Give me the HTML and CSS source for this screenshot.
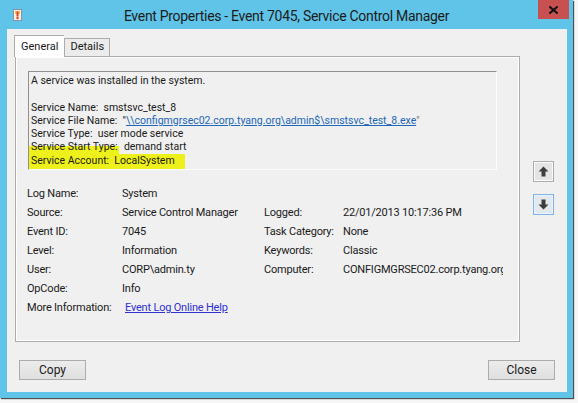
FILE: index.html
```html
<!DOCTYPE html>
<html>
<head>
<meta charset="utf-8">
<title>Event Properties</title>
<link rel="stylesheet" href="styles.css">
</head>
<body>
<div class="window">
  <div class="titlebar">
    <div class="tb-left">
      <svg class="app-icon" width="9" height="12" viewBox="0 0 9 12">
        <rect x="0.5" y="0.5" width="8" height="11" fill="#f7f1d8" stroke="#8c8fb0"/>
        <rect x="2" y="2" width="5" height="3" fill="#f1c24a"/>
        <rect x="3.5" y="2.5" width="2" height="5" fill="#d9443a"/>
        <circle cx="4.5" cy="9" r="1.2" fill="#d9443a"/>
      </svg>
    </div>
    <div class="title">Event Properties - Event 7045, Service Control Manager</div>
    <div class="tb-right">
      <div class="close-btn">
        <svg width="9" height="8" viewBox="0 0 9 8"><path d="M1 1 L8 7 M8 1 L1 7" stroke="#111" stroke-width="2" stroke-linecap="square"/></svg>
      </div>
    </div>
  </div>
  <div class="client">
    <div class="main-row">
      <div class="tabctrl">
        <div class="tabs">
          <div class="tab active">General</div>
          <div class="tab">Details</div>
        </div>
        <div class="panel">
          <div class="desc">
            <div>A service was installed in the system.</div>
            <div>&nbsp;</div>
            <div>Service Name:&nbsp; smstsvc_test_8</div>
            <div>Service File Name:&nbsp; "<a class="link" href="#">\\configmgrsec02.corp.tyang.org\admin$\smstsvc_test_8.exe</a><span class="quote">"</span></div>
            <div>Service Type:&nbsp; user mode service</div>
            <div><span class="hl-part">Service Start Type:</span>&nbsp; demand start</div>
            <div><span class="hl">Service Account:&nbsp; LocalSystem</span></div>
          </div>
          <div class="fields">
            <div class="lbl">Log Name:</div><div class="val">System</div><div></div><div></div>
            <div class="lbl">Source:</div><div class="val">Service Control Manager</div><div class="lbl">Logged:</div><div class="val2">22/01/2013 10:17:36 PM</div>
            <div class="lbl">Event ID:</div><div class="val">7045</div><div class="lbl">Task Category:</div><div class="val2">None</div>
            <div class="lbl">Level:</div><div class="val">Information</div><div class="lbl">Keywords:</div><div class="val2">Classic</div>
            <div class="lbl">User:</div><div class="val">CORP\admin.ty</div><div class="lbl">Computer:</div><div class="val2">CONFIGMGRSEC02.corp.tyang.org</div>
            <div class="lbl">OpCode:</div><div class="val">Info</div><div></div><div></div>
            <div class="lbl">More Information:</div><div class="val wide"><a class="help" href="#">Event Log Online Help</a></div>
          </div>
        </div>
      </div>
      <div class="side">
        <div class="sbtn">
          <svg width="11" height="11" viewBox="0 0 11 11"><path d="M5.5 0.5 L10.5 5.5 H7.5 V10.5 H3.5 V5.5 H0.5 Z" fill="#3d3d3d"/></svg>
        </div>
        <div class="sbtn focus">
          <svg width="11" height="11" viewBox="0 0 11 11"><path d="M5.5 10.5 L10.5 5.5 H7.5 V0.5 H3.5 V5.5 H0.5 Z" fill="#3d3d3d"/></svg>
        </div>
      </div>
    </div>
    <div class="footer">
      <div class="btn">Copy</div>
      <div class="btn">Close</div>
    </div>
  </div>
</div>
</body>
</html>
```
FILE: styles.css
```css
* { box-sizing: border-box; }
html, body { margin: 0; padding: 0; }
body {
  width: 578px;
  height: 403px;
  overflow: hidden;
  background: #f6f6f6;
  font-family: Roboto, "Noto Sans", sans-serif;
  font-size: 11px;
  color: #1a1a1a;
}
.window {
  width: 573px;
  height: 398px;
  background: #60c4e8;
  box-shadow: 1px 1px 1px rgba(50, 50, 50, 0.85);
  display: flex;
  flex-direction: column;
}
.titlebar {
  height: 29px;
  flex: none;
  display: grid;
  grid-template-columns: 1fr auto 1fr;
  align-items: start;
}
.tb-left { display: flex; padding: 9px 0 0 13px; }
.tb-right { display: flex; justify-content: flex-end; padding-right: 4px; }
.title {
  font-size: 14px;
  letter-spacing: -0.3px;
  line-height: 18px;
  padding-top: 7px;
  color: #1c1c1c;
  white-space: nowrap;
}
.close-btn {
  width: 31px;
  height: 19px;
  background: #c75050;
  display: flex;
  align-items: center;
  justify-content: center;
}
.client {
  flex: 1;
  margin: 0 6px 6px 7px;
  background: #f0f0f0;
  padding-top: 6px;
  display: flex;
  flex-direction: column;
}
.main-row { display: flex; padding-left: 8px; }
.tabctrl { width: 505px; display: flex; flex-direction: column; }
.tabs { display: flex; align-items: flex-end; height: 21px; }
.tab {
  height: 18px;
  border: 1px solid #acacac;
  border-bottom: none;
  background: #ececec;
  padding: 0 5px;
  line-height: 16px;
}
.tab.active {
  height: 22px;
  margin-left: -1px;
  margin-bottom: -1px;
  background: #ffffff;
  position: relative;
  padding: 3px 6px 0 6px;
  border-right: none;
}
.panel {
  height: 286px;
  border: 1px solid #acacac;
  box-shadow: inset 0 0 0 1px #ffffff;
  background: #f0f0f0;
  padding: 14px 0 0 11px;
}
.desc {
  width: 469px;
  height: 99px;
  margin-left: 1px;
  border-top: 1px solid #8f8f8f;
  border-left: 1px solid #8f8f8f;
  border-right: 1px solid #fcfcfc;
  border-bottom: 1px solid #fcfcfc;
  padding: 2px 0 0 2px;
  font-size: 10.5px;
  line-height: 13.3px;
  white-space: nowrap;
}
.link { color: #2067b8; text-decoration: underline; }
.quote { color: #777; }
.hl-part { background: linear-gradient(to bottom, transparent 45%, #eef01c 45%); padding: 0 1px 1px 2px; margin-left: -2px; }
.hl { background: #eef01c; padding: 0 10px 2px 2px; margin-left: -2px; }
.fields {
  margin-top: 14px;
  display: grid;
  grid-template-columns: 95px 142px 79px 160px;
  grid-auto-rows: 19px;
  line-height: 19px;
  letter-spacing: -0.2px;
  white-space: nowrap;
}
.val2 { overflow: hidden; }
.wide { grid-column: 2 / 5; }
.help { color: #3131cf; text-decoration: underline; margin-left: 3px; }
.side {
  margin-left: 13px;
  padding-top: 126px;
  display: flex;
  flex-direction: column;
  gap: 12px;
}
.sbtn {
  width: 21px;
  height: 21px;
  border: 1px solid #acacac;
  box-shadow: inset 0 0 0 1px #fbfbfb;
  background: #e4e4e4;
  display: flex;
  align-items: center;
  justify-content: center;
}
.sbtn.focus { border-color: #7eb4ea; box-shadow: inset 0 0 0 1px #eaf3fc; background: #e2e8ee; }
.footer {
  margin-top: 18px;
  padding: 0 12px;
  display: flex;
  justify-content: space-between;
}
.btn {
  width: 67px;
  height: 20px;
  border: 1px solid #acacac;
  background: linear-gradient(#ececec, #dfdfdf);
  text-align: center;
  line-height: 18px;
  font-size: 12px;
}
```
